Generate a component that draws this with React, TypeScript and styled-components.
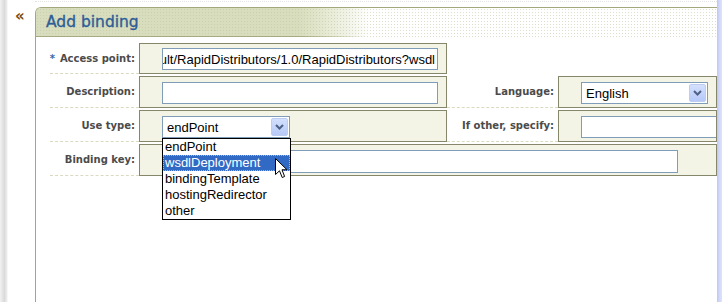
import React from 'react';
import styled, { createGlobalStyle } from 'styled-components';

const Global = createGlobalStyle`
  html, body { margin: 0; padding: 0; background: #fff; }
  body { width: 722px; height: 302px; overflow: hidden; font-family: "DejaVu Sans", Verdana, sans-serif; }
  * { box-sizing: border-box; }
`;

const Page = styled.div`
  display: flex;
  width: 722px;
  height: 302px;
  overflow: hidden;
  background: #fff;
`;

const Gutter = styled.div`
  width: 35px;
  flex: none;
  display: flex;
`;

const Shadow = styled.div`
  width: 8px;
  height: 100%;
  background: linear-gradient(to right, #f2f2f2 0, #dadada 55%, #ececec 85%, #fff 100%);
`;

const BackLink = styled.span`
  margin-left: 7px;
  padding-top: 8px;
  font: bold 15px "DejaVu Sans", sans-serif;
  color: #7b4a12;
  line-height: 16px;
`;

const Main = styled.div`
  flex: 1;
  display: flex;
  flex-direction: column;
  padding-top: 1px;
`;

const DotRule = styled.div`
  border-top: 1px dotted #e2e2e2;
  margin-bottom: 5px;
`;

const Panel = styled.section`
  flex: 1;
  border-top: 1px solid #a4a67c;
  border-left: 1px solid #a4a67c;
  border-top-left-radius: 6px;
  overflow: hidden;
`;

const Header = styled.div`
  height: 29px;
  padding-left: 10px;
  display: flex;
  align-items: center;
  background:
    linear-gradient(to right, #a7aa80 0, #a7aa80 260px, rgba(255,255,255,0) 330px) bottom / 100% 1px no-repeat,
    radial-gradient(circle, rgba(190,198,160,0.55) 0.6px, transparent 0.9px) 0 0 / 3px 3px,
    linear-gradient(to right, #d7ddbd 0, #d7ddbd 262px, #e6e9d2 290px, #f2f3e8 312px, #fff 334px);
`;

const Title = styled.h1`
  margin: 0;
  padding-bottom: 1px;
  font: normal 15.5px "DejaVu Sans", Verdana, sans-serif;
  -webkit-text-stroke: 0.35px #2e5d97;
  color: #2e5d97;
`;

const Form = styled.div`
  display: grid;
  grid-template-columns: 89px 308px 111px 1fr;
  grid-template-rows: 31px 32px 32px 32px;
  row-gap: 2px;
  padding: 6px 0 0 14px;
`;

const Label = styled.div`
  display: flex;
  align-items: center;
  justify-content: flex-end;
  padding-right: 4px;
  border-bottom: 1px dashed #dadac0;
  font: bold 10px "DejaVu Sans", Verdana, sans-serif;
  color: #4b4b4b;
  white-space: nowrap;
`;

const Star = styled.span`
  color: #3b6aa8;
  margin-right: 5px;
  font-size: 10px;
`;

const Spacer = styled.div<{ $span: number }>`
  grid-column: span ${p => p.$span};
`;

const Cell = styled.div<{ $span?: number; $pt?: number; $clip?: boolean }>`
  grid-column: span ${p => p.$span ?? 1};
  display: flex;
  align-items: flex-start;
  padding: ${p => p.$pt ?? 4}px 0 0 22px;
  border: 1px solid #86876a;
  background: #f4f4e6;
  overflow: ${p => (p.$clip ? 'hidden' : 'visible')};
  min-width: 0;
`;

const Field = styled.div<{ $w: number; $h?: number; $end?: boolean }>`
  width: ${p => p.$w}px;
  height: ${p => p.$h ?? 22}px;
  flex: none;
  display: flex;
  align-items: center;
  justify-content: ${p => (p.$end ? 'flex-end' : 'flex-start')};
  padding: 0 2px;
  border: 1px solid #7f9db9;
  background: #fff;
  font: 13px "Liberation Sans", Arial, sans-serif;
  color: #000;
  white-space: nowrap;
  overflow: hidden;
`;

const Select = styled.div<{ $w: number }>`
  position: relative;
  width: ${p => p.$w}px;
  height: 22px;
  flex: none;
  display: flex;
  align-items: center;
  padding-left: 4px;
  border: 1px solid #7f9db9;
  background: #fff;
  font: 13px "Liberation Sans", Arial, sans-serif;
  color: #000;
`;

const SelectText = styled.span`
  flex: 1;
`;

const DropButton = styled.span`
  width: 17px;
  height: 18px;
  margin-right: 1px;
  display: flex;
  align-items: center;
  justify-content: center;
  border: 1px solid #bccdf4;
  border-radius: 2px;
  background: linear-gradient(#d3e0fd, #b6c9f7);
`;

const List = styled.ul`
  position: absolute;
  top: calc(100% + 1px);
  left: -1px;
  width: 129px;
  margin: 0;
  padding: 0;
  list-style: none;
  border: 1px solid #000;
  background: #fff;
  z-index: 5;
`;

const Item = styled.li<{ $active?: boolean }>`
  height: 16px;
  padding-left: 2px;
  font: 13px/16px "Liberation Sans", Arial, sans-serif;
  color: ${p => (p.$active ? '#fff' : '#000')};
  background: ${p => (p.$active ? '#316ac5' : '#fff')};
  outline: ${p => (p.$active ? '1px dotted #e8b04a' : 'none')};
  outline-offset: -1px;
`;

const Cursor = styled.svg`
  position: absolute;
  left: 112px;
  top: 19px;
  z-index: 6;
`;

const RightStrip = styled.div`
  width: 5px;
  flex: none;
  background: linear-gradient(to right, #bcc6f0, #cfd7f9 40%, #dde2fb);
`;

const Chevron = () => (
  <svg width="9" height="6" viewBox="0 0 9 6">
    <path d="M1 1 L4.5 4.5 L8 1" fill="none" stroke="#4d6185" strokeWidth="2" />
  </svg>
);

const options = ['endPoint', 'wsdlDeployment', 'bindingTemplate', 'hostingRedirector', 'other'];

export default function App() {
  return (
    <Page>
      <Global />
      <Gutter>
        <Shadow />
        <BackLink>«</BackLink>
      </Gutter>
      <Main>
        <DotRule />
        <Panel>
          <Header>
            <Title>Add binding</Title>
          </Header>
          <Form>
            <Label>
              <Star>*</Star>Access point:
            </Label>
            <Cell $pt={4}>
              <Field $w={276} $end>
                http://localhost:7001/registry/default/RapidDistributors/1.0/RapidDistributors?wsdl
              </Field>
            </Cell>
            <Spacer $span={2} />

            <Label>Description:</Label>
            <Cell $pt={5}>
              <Field $w={276} />
            </Cell>
            <Label>Language:</Label>
            <Cell $pt={5}>
              <Select $w={127}>
                <SelectText>English</SelectText>
                <DropButton>
                  <Chevron />
                </DropButton>
              </Select>
            </Cell>

            <Label>Use type:</Label>
            <Cell $pt={5}>
              <Select $w={128}>
                <SelectText>endPoint</SelectText>
                <DropButton>
                  <Chevron />
                </DropButton>
                <List>
                  {options.map(o => (
                    <Item key={o} $active={o === 'wsdlDeployment'}>
                      {o}
                    </Item>
                  ))}
                  <Cursor width="13" height="21" viewBox="0 0 13 21">
                    <path
                      d="M0.5 0.5 L0.5 16.5 L4.5 12.8 L7.2 19.5 L9.6 18.5 L7 11.8 L12 11.8 Z"
                      fill="#fff"
                      stroke="#000"
                      strokeWidth="1"
                      strokeLinejoin="miter"
                    />
                  </Cursor>
                </List>
              </Select>
            </Cell>
            <Label>If other, specify:</Label>
            <Cell $pt={5} $clip>
              <Field $w={200} />
            </Cell>

            <Label>Binding key:</Label>
            <Cell $span={3} $pt={5}>
              <Field $w={516} $h={23} />
            </Cell>
          </Form>
        </Panel>
      </Main>
      <RightStrip />
    </Page>
  );
}
